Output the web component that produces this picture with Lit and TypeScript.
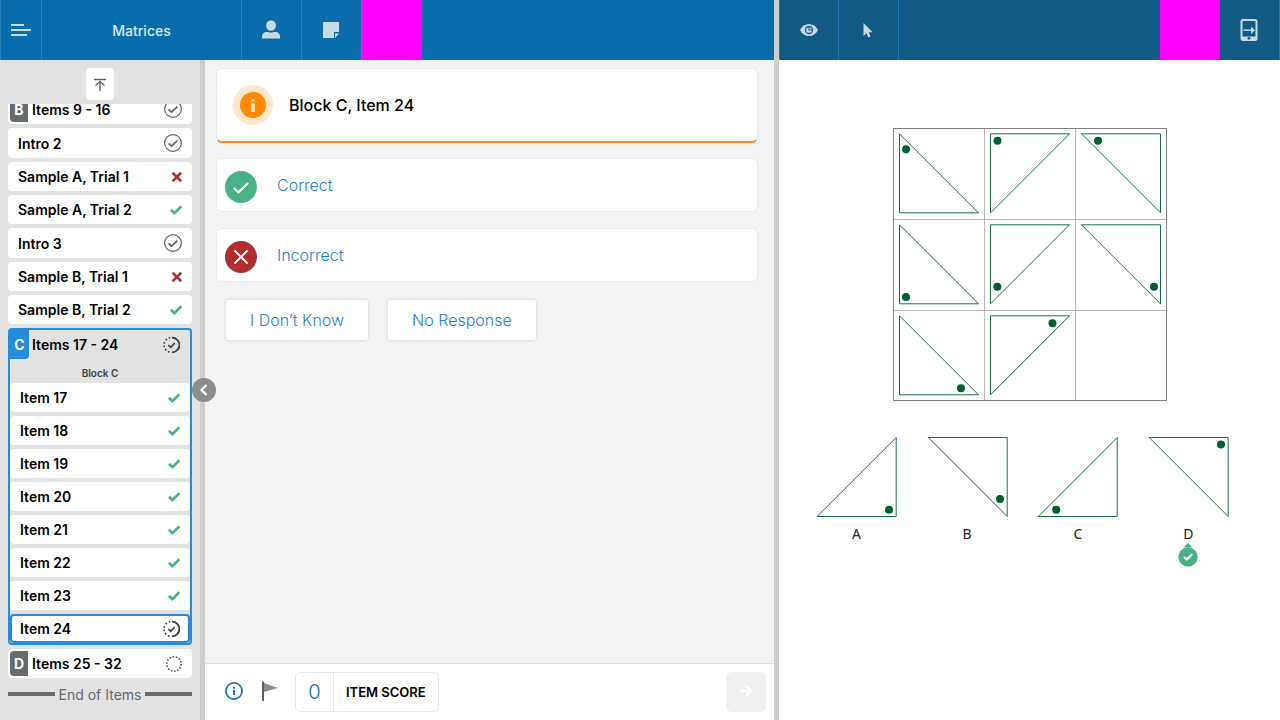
import { LitElement, html, css, svg, nothing } from "lit";
import { customElement, property } from "lit/decorators.js";
import { classMap } from "lit/directives/class-map.js";

type Status = "done" | "right" | "wrong" | "active" | "open";

const reset = css`
  *, *::before, *::after { box-sizing: border-box; }
  button { font: inherit; color: inherit; background: none; border: 0; padding: 0; margin: 0; cursor: pointer; }
  svg { display: block; flex: none; }
`;

@customElement("status-icon")
class StatusIcon extends LitElement {
  @property() kind: Status = "done";
  static styles = [reset, css`:host { display: block; flex: none; }`];
  render() {
    switch (this.kind) {
      case "right":
        return html`<svg width="12" height="12" viewBox="0 0 12 12"><path d="M.8 5.800 4.400 9.200 11.400 2.300" fill="none" stroke="#47b285" stroke-width="2.600"/></svg>`;
      case "wrong":
        return html`<svg width="11" height="12" viewBox="0 0 11 12"><path d="M1.500 1.700 10.100 10.300M10.100 1.700 1.500 10.300" stroke="#b02e2e" stroke-width="2.600"/></svg>`;
      case "active":
        return html`<svg width="17" height="18" viewBox="0 0 17 18"><g fill="none" stroke="#3a3d3d"><path d="M9 1.600a7.400 7.400 0 0 1 0 14.800" stroke-width="1.800"/><path d="M7.200 1.700a7.400 7.400 0 0 0 0 14.600" stroke-width="1.600" stroke-dasharray="1.600 2"/><path d="M5.300 9 7.700 11.400 11.700 7.100" stroke-width="1.600"/></g></svg>`;
      case "open":
        return html`<svg width="16" height="18" viewBox="0 0 16 18"><circle cx="8" cy="9" r="7.200" fill="none" stroke="#555858" stroke-width="1.600" stroke-dasharray="1.600 1.630"/></svg>`;
      default:
        return html`<svg width="18" height="18" viewBox="0 0 18 18"><g fill="none" stroke="#606464"><circle cx="9" cy="9" r="8.400" stroke-width="1.200"/><path d="M4.600 9.400 7.600 12.200 13.400 6.600" stroke-width="1.700"/></g></svg>`;
    }
  }
}

@customElement("item-row")
class ItemRow extends LitElement {
  @property() label = "";
  @property() badge = "";
  @property() kind: Status = "done";
  @property({ type: Boolean }) tall = false;
  @property({ type: Boolean }) selected = false;
  @property({ type: Boolean }) group = false;
  static styles = [reset, css`
    :host { display: block; }
    .row { display: flex; align-items: center; width: 100%; height: 29px; padding: 0 10px; background: #fff; border-radius: 4px; color: #000; text-align: left; overflow: hidden; }
    .tall { height: 30px; }
    .label { flex: 1; }
    .badged { padding-left: 2px; }
    .badge { display: flex; align-items: center; justify-content: center; width: 18px; height: 25px; margin-right: 4px; background: #666b6b; color: #fff; font-weight: 700; border-radius: 4px 0 0 4px; }
    .group { background: none; padding-left: 0; border-radius: 0; }
    .group .badge { width: 19px; height: 29px; margin-right: 3px; background: #268bdb; border-radius: 0 0 4px 0; }
    .selected { padding: 0 8px; border: 2px solid #268bdb; }
  `];
  render() {
    return html`<button class=${classMap({ row: true, tall: this.tall, selected: this.selected, group: this.group, badged: !!this.badge && !this.group })}>
      ${this.badge ? html`<span class="badge">${this.badge}</span>` : nothing}
      <span class="label">${this.label}</span>
      <status-icon .kind=${this.kind}></status-icon>
    </button>`;
  }
}

@customElement("item-nav")
class ItemNav extends LitElement {
  static styles = [reset, css`
    :host { display: flex; flex-direction: column; min-height: 0; padding: 8px 8px 0; background: #e2e2e2; font-weight: 600; font-size: 14px; line-height: 19px; }
    .top { align-self: center; display: grid; place-items: center; width: 28px; height: 32px; background: #fff; border-radius: 4px; margin-bottom: 4px; flex: none; }
    .scroller { flex: 1; min-height: 0; display: flex; flex-direction: column-reverse; overflow-y: auto; scrollbar-width: none; }
    .list { display: flex; flex-direction: column; gap: 4px; flex: none; padding-bottom: 14px; }
    .block { display: flex; flex-direction: column; gap: 4px; border: 2px solid #268bdb; border-radius: 4px; }
    .caption { height: 16px; font-size: 10px; line-height: 12px; padding-top: 4px; text-align: center; color: #3c4048; }
    .end { display: flex; align-items: center; gap: 4px; height: 24px; font-weight: 400; color: #666b6b; }
    .end::before, .end::after { content: ""; flex: 1; height: 4px; background: #666b6b; }
  `];
  render() {
    const before: [string, Status][] = [
      ["Intro 2", "done"], ["Sample A, Trial 1", "wrong"], ["Sample A, Trial 2", "right"],
      ["Intro 3", "done"], ["Sample B, Trial 1", "wrong"], ["Sample B, Trial 2", "right"],
    ];
    const items = [17, 18, 19, 20, 21, 22, 23];
    return html`
      <button class="top" aria-label="Scroll to top"><svg width="12" height="14" viewBox="0 0 12 14"><path d="M0 2.500h12M6 14V4.500M1.500 8.500 6 4.500 10.500 8.500" fill="none" stroke="#606464" stroke-width="1.400"/></svg></button>
      <div class="scroller"><div class="list">
        <item-row badge="B" label="Items 9 - 16" kind="done" tall></item-row>
        ${before.map(([l, k]) => html`<item-row .label=${l} .kind=${k} ?tall=${k === "done"}></item-row>`)}
        <div class="block">
          <item-row group badge="C" label="Items 17 - 24" kind="active"></item-row>
          <div class="caption">Block C</div>
          ${items.map((n) => html`<item-row .label=${`Item ${n}`} kind="right"></item-row>`)}
          <item-row label="Item 24" kind="active" selected></item-row>
        </div>
        <item-row badge="D" label="Items 25 - 32" kind="open"></item-row>
        <div class="end">End of Items</div>
      </div></div>`;
  }
}

const STROKE = "#00602b";

/* Corner points of the 79px right triangles, named by where the right angle sits. */
const SHAPES = {
  bl: "0,0 0,79 79,79",
  tl: "0,79 0,0 79,0",
  tr: "0,0 79,0 79,79",
  br: "0,79 79,79 79,0",
};
type Shape = keyof typeof SHAPES;
const triangle = (shape: Shape, cx: number, cy: number) => svg`
  <polygon points=${SHAPES[shape]} fill="none" stroke=${STROKE} stroke-width="0.9"/>
  <circle cx=${cx} cy=${cy} r="4" fill=${STROKE}/>`;

@customElement("matrix-stimulus")
class MatrixStimulus extends LitElement {
  static styles = [reset, css`
    :host { display: flex; flex-direction: column; align-items: center; padding: 68px 16px 16px; background: #fff; overflow: auto; }
    .matrix { margin-bottom: 32px; }
    .options { display: flex; justify-content: space-between; width: 100%; max-width: 413px; margin-right: 14px; }
    .option { display: flex; flex-direction: column; align-items: center; font: 14px/20px "Noto Sans", "Open Sans", sans-serif; color: #222; }
    .name { margin-top: 6px; }
    .marker { margin-top: -1px; }
  `];
  render() {
    const cells: [Shape, number, number][] = [
      ["bl", 6.5, 15.5], ["tl", 7, 7], ["tr", 16.5, 7],
      ["bl", 6.5, 72.2], ["tl", 6.8, 62], ["tr", 72.5, 62],
      ["bl", 61.5, 72.5], ["tl", 62, 7.5],
    ];
    const options: [string, Shape, number, number][] = [
      ["A", "br", 71.8, 72.2], ["B", "tr", 71.8, 61.5], ["C", "br", 18, 72.2], ["D", "tr", 71.8, 7],
    ];
    return html`
      <svg class="matrix" width="274" height="274" viewBox="0 0 274 274" role="img" aria-label="Matrix puzzle">
        <path d="M91.500 0v273M182.500 0v273M0 91.500h274M0 182.500h274" stroke="#b8b8b8"/>
        <path d="M0 .5h274M.5 0v273M273.500 0v273M0 272.500h274" stroke="#808080"/>
        ${cells.map(([s, x, y], i) => svg`<g transform=${`translate(${(i % 3) * 91 + 6.5} ${Math.floor(i / 3) * 91 + 5.8})`}>${triangle(s, x, y)}</g>`)}
      </svg>
      <div class="options">
        ${options.map(([n, s, x, y]) => html`<button class="option">
          <svg width="81" height="84" viewBox="-1.200 -3.500 81 84">${triangle(s, x, y)}</svg>
          <span class="name">${n}</span>
          ${n === "D" ? html`<svg class="marker" width="20" height="24" viewBox="0 0 20 24"><path d="M10 0 14.500 4.500h-9z" fill="#47b285"/><circle cx="10" cy="14" r="9.700" fill="#47b285"/><path d="M6 13.800 8.800 16.500 14.300 11" fill="none" stroke="#fff" stroke-width="2"/></svg>` : nothing}
        </button>`)}
      </div>`;
  }
}

@customElement("app-root")
class AppRoot extends LitElement {
  static styles = [reset, css`
    :host { display: grid; grid-template-columns: minmax(0, 774fr) 5px minmax(0, 501fr); height: 100vh; overflow: hidden; font-family: Inter, sans-serif; color: #000; }
    .pane { display: flex; flex-direction: column; min-height: 0; }
    .split { background: #cecece; }
    .bar { display: flex; flex: none; height: 60px; background: #096dab; color: #c9d9e6; }
    .bar.dark { background: #125b86; border-left: 1px solid #2079b4; }
    .cell { display: grid; place-items: center; width: 60px; padding-right: 1px; border-right: 1px solid #2b81bc; }
    .dark .cell { border-color: #2079b4; }
    .dark .cell.first { width: 59px; padding-right: 0; }
    .cell.menu { width: 42px; padding-right: 0; border-left: 1px solid #2b81bc; }
    .title { width: 200px; margin: 0; display: grid; place-items: center; border-right: 1px solid #2b81bc; font-size: 14px; font-weight: 500; color: #dce8f1; }
    .block { width: 60px; background: #f0f; }
    .push { margin-left: auto; }
    .work { position: relative; flex: 1; min-height: 0; display: grid; grid-template-columns: 200px 5px minmax(0, 1fr); grid-template-rows: minmax(0, 1fr); }
    .collapse { position: absolute; left: 192px; top: 318px; width: 24px; height: 24px; border-radius: 50%; background: #898d8d; display: grid; place-items: center; }
    .main { display: flex; flex-direction: column; min-height: 0; background: #f3f3f3; }
    .content { flex: 1; display: flex; flex-direction: column; gap: 16px; padding: 8px 16px 8px 11px; overflow: auto; }
    .card { display: flex; align-items: center; width: 100%; flex: none; background: #fff; border: 1px solid #e4e7f3; border-radius: 6px; text-align: left; }
    .heading { height: 75px; padding: 0 16px; gap: 16px; border-bottom: 2px solid #ff8a00; margin-bottom: -1px; }
    .heading h2 { margin: 0; font-size: 16px; line-height: 20px; font-weight: 500; }
    .answer { height: 54px; padding: 3px 8px 0; gap: 20px; font-size: 16px; line-height: 20px; color: #1f80d6; font-weight: 300; }
    .answer span { padding-bottom: 4px; }
    .others { display: flex; gap: 16px; padding-left: 8px; }
    .other { height: 44px; padding: 0 24px; background: #fff; border: 2px solid #e4e8f3; border-radius: 5px; font-size: 16px; font-weight: 300; color: #1f80d6; }
    .foot { flex: none; display: flex; align-items: center; height: 57px; padding: 0 8px 0 20px; background: #fff; border-top: 1px solid #dedede; }
    .info { margin-right: 19px; padding-bottom: 2px; }
    .flag { margin-right: 17px; padding-bottom: 2px; }
    .score { display: flex; height: 40px; border: 1px solid #e4e7f3; border-radius: 6px; }
    .score output { display: grid; place-items: center; width: 38px; border-right: 1px solid #e4e7f3; font-size: 20px; font-weight: 300; color: #096dab; }
    .score label { display: grid; place-items: center; padding: 0 12px; font-size: 13px; font-weight: 600; }
    .next { display: grid; place-items: center; width: 40px; height: 40px; border-radius: 6px; background: #f0f0f0; }
    matrix-stimulus { flex: 1; min-height: 0; }
  `];
  render() {
    return html`
      <section class="pane">
        <header class="bar">
          <button class="cell menu" aria-label="Menu"><svg width="20" height="12" viewBox="0 0 20 12"><path d="M0 1h13M0 6h20M0 11h16" stroke="#c9d9e6" stroke-width="2"/></svg></button>
          <h1 class="title">Matrices</h1>
          <button class="cell" aria-label="Examinee"><svg width="18" height="20" viewBox="0 0 18 20" fill="#c9d9e6"><ellipse cx="9" cy="5.500" rx="4.900" ry="5.200"/><path d="M0 18.500v-1.500C0 13.500 2 12 5 12c1.500 0 2.300.7 4 .7s2.500-.7 4-.7c3 0 5 1.500 5 5v1.500z"/></svg></button>
          <button class="cell" aria-label="Notes"><svg width="16" height="16" viewBox="0 0 16 16" fill="#c9d9e6"><path d="M0 0h16v10h-5v6H0zM12 11.500h4L12 16z"/></svg></button>
          <div class="block"></div>
        </header>
        <div class="work">
          <item-nav></item-nav>
          <div class="split"></div>
          <main class="main">
            <div class="content">
              <div class="card heading">
                <svg width="40" height="40" viewBox="0 0 40 40"><circle cx="20" cy="20" r="20" fill="#ffe7cc"/><circle cx="20" cy="20" r="13" fill="#ff8a00"/><path d="M18.300 18.500h3.500v8.500h-3.500zM18.500 14h3v2.600h-3z" fill="#ffe7cc"/></svg>
                <h2>Block C, Item 24</h2>
              </div>
              <button class="card answer">
                <svg width="32" height="32" viewBox="0 0 32 32"><circle cx="16" cy="16" r="16" fill="#47b285"/><path d="M9.500 17.500 13.500 21.500 22.500 12.500" fill="none" stroke="#fff" stroke-width="2.200" stroke-linecap="round" stroke-linejoin="round"/></svg>
                <span>Correct</span>
              </button>
              <button class="card answer">
                <svg width="32" height="32" viewBox="0 0 32 32"><circle cx="16" cy="16" r="16" fill="#b02e2e"/><path d="M10 10 22 22M22 10 10 22" stroke="#fff" stroke-width="1.800" stroke-linecap="round"/></svg>
                <span>Incorrect</span>
              </button>
              <div class="others">
                <button class="other">I Don’t Know</button>
                <button class="other">No Response</button>
              </div>
            </div>
            <footer class="foot">
              <button class="info" aria-label="Information"><svg width="18" height="18" viewBox="0 0 18 18"><circle cx="9" cy="9" r="8.100" fill="none" stroke="#1272ae" stroke-width="1.700"/><path d="M8.100 8h1.900v5H8.100zM8.100 5h1.900v1.700H8.100z" fill="#1272ae"/></svg></button>
              <button class="flag" aria-label="Flag item"><svg width="16" height="20" viewBox="0 0 16 20"><path d="M0 .5h2V20H0z" fill="#5c6060"/><path d="M2 2 16 7 2 11z" fill="#898d8d"/></svg></button>
              <div class="score"><output id="score">0</output><label for="score">ITEM SCORE</label></div>
              <button class="next push" aria-label="Next item"><svg width="12" height="14" viewBox="0 0 12 14"><path d="M0 6h11M6 .8 11 6 6 11.200" fill="none" stroke="#fff" stroke-width="2.400"/></svg></button>
            </footer>
          </main>
          <button class="collapse" aria-label="Collapse item list"><svg width="10" height="12" viewBox="0 0 10 12"><path d="M7.500 1 2.500 6 7.500 11" fill="none" stroke="#fff" stroke-width="2.400"/></svg></button>
        </div>
      </section>
      <div class="split"></div>
      <section class="pane">
        <header class="bar dark">
          <button class="cell first" aria-label="Show stimulus"><svg width="18" height="12" viewBox="0 0 18 12"><path d="M0 6C2 2 5.200 0 9 0s7 2 9 6c-2 4-5.200 6-9 6S2 10 0 6z" fill="#c9d9e6"/><circle cx="9" cy="6" r="3.500" fill="none" stroke="#125b86" stroke-width="1.300"/><path d="M9 3.200V6h2.800" fill="none" stroke="#125b86" stroke-width="1.100"/></svg></button>
          <button class="cell" aria-label="Pointer"><svg width="10" height="16" viewBox="0 0 10 16"><path d="M.5 1v13l3-2.700 1.800 4.200 2.200-1-1.800-4.200h3.900z" fill="#c9d9e6"/></svg></button>
          <div class="block push"></div>
          <button class="cell" aria-label="Send to device"><svg width="18" height="22" viewBox="0 0 18 22"><rect x="1.500" y="1" width="15" height="20" rx="1.500" fill="none" stroke="#c9d9e6" stroke-width="2"/><path d="M1.500 17.500h15v3.500h-15z" fill="#c9d9e6"/><path d="M3.500 11.200h8" stroke="#c9d9e6" stroke-width="1.500"/><path d="M11 7.500 15 11.200l-4 3.700z" fill="#c9d9e6"/><circle cx="9" cy="19.300" r="1.400" fill="#125b86"/></svg></button>
        </header>
        <matrix-stimulus></matrix-stimulus>
      </section>`;
  }
}
